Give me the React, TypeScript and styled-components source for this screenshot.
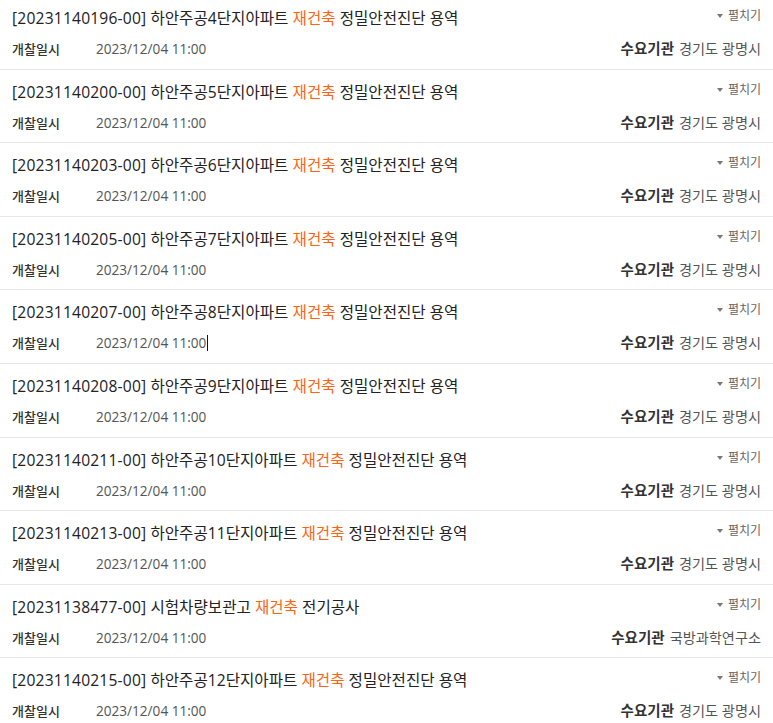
import React from "react";
import styled, { createGlobalStyle } from "styled-components";

interface Bid {
  no: string;
  before: string;
  after: string;
  agency: string;
  date: string;
  caret?: boolean;
}

const bids: Bid[] = [
  { no: "20231140196-00", before: "하안주공4단지아파트", after: "정밀안전진단 용역", agency: "경기도 광명시", date: "2023/12/04 11:00" },
  { no: "20231140200-00", before: "하안주공5단지아파트", after: "정밀안전진단 용역", agency: "경기도 광명시", date: "2023/12/04 11:00" },
  { no: "20231140203-00", before: "하안주공6단지아파트", after: "정밀안전진단 용역", agency: "경기도 광명시", date: "2023/12/04 11:00" },
  { no: "20231140205-00", before: "하안주공7단지아파트", after: "정밀안전진단 용역", agency: "경기도 광명시", date: "2023/12/04 11:00" },
  { no: "20231140207-00", before: "하안주공8단지아파트", after: "정밀안전진단 용역", agency: "경기도 광명시", date: "2023/12/04 11:00", caret: true },
  { no: "20231140208-00", before: "하안주공9단지아파트", after: "정밀안전진단 용역", agency: "경기도 광명시", date: "2023/12/04 11:00" },
  { no: "20231140211-00", before: "하안주공10단지아파트", after: "정밀안전진단 용역", agency: "경기도 광명시", date: "2023/12/04 11:00" },
  { no: "20231140213-00", before: "하안주공11단지아파트", after: "정밀안전진단 용역", agency: "경기도 광명시", date: "2023/12/04 11:00" },
  { no: "20231138477-00", before: "시험차량보관고", after: "전기공사", agency: "국방과학연구소", date: "2023/12/04 11:00" },
  { no: "20231140215-00", before: "하안주공12단지아파트", after: "정밀안전진단 용역", agency: "경기도 광명시", date: "2023/12/04 11:00" },
];

const GlobalStyle = createGlobalStyle`
  html, body {
    margin: 0;
    padding: 0;
    background: #fff;
  }
  body {
    font-family: "Open Sans", "Noto Sans CJK KR", sans-serif;
    overflow: hidden;
  }
`;

const List = styled.ul`
  list-style: none;
  margin: -4px 0 0;
  padding: 0;
`;

const Row = styled.li`
  display: flex;
  flex-direction: column;
  gap: 6px;
  padding: 10px 12px 0 12px;
  border-bottom: 1px solid #e6e6e6;
  height: 73.6px;
  box-sizing: border-box;
`;

const Line = styled.div<{ $top?: boolean }>`
  display: flex;
  justify-content: space-between;
  align-items: ${(p) => (p.$top ? "flex-start" : "center")};
  height: 24px;
`;

const Title = styled.div`
  font-size: 15.6px;
  line-height: 24px;
  color: #222;
  white-space: nowrap;
`;

const Code = styled.span`
  letter-spacing: 0.2px;
`;

const Keyword = styled.span`
  color: #ff6414;
`;

const Toggle = styled.button`
  display: flex;
  align-items: center;
  gap: 5px;
  border: 0;
  background: none;
  padding: 0;
  margin-top: 2px;
  font-family: inherit;
  font-size: 12px;
  line-height: 16px;
  color: #666;
  cursor: pointer;
`;

const Arrow = styled.span`
  width: 0;
  height: 0;
  border-left: 3.5px solid transparent;
  border-right: 3.5px solid transparent;
  border-top: 4px solid #777;
`;

const Meta = styled.div`
  display: flex;
  align-items: center;
  line-height: 24px;
  margin-top: 2px;
`;

const Label = styled.span<{ $wide?: boolean }>`
  font-weight: ${(p) => (p.$wide ? 500 : 700)};
  color: #333;
  width: ${(p) => (p.$wide ? "84px" : "auto")};
  margin-right: ${(p) => (p.$wide ? "0" : "5px")};
  font-size: ${(p) => (p.$wide ? "13px" : "14.5px")};
`;

const Value = styled.span<{ $big?: boolean }>`
  color: #555;
  font-size: ${(p) => (p.$big ? "14.2px" : "13.6px")};
`;

const Caret = styled.span`
  display: inline-block;
  width: 1px;
  height: 16px;
  background: #111;
  vertical-align: -3px;
  margin-left: 1px;
`;

const App: React.FC = () => {
  return (
    <>
      <GlobalStyle />
      <List>
        {bids.map((bid) => (
          <Row key={bid.no}>
            <Line $top>
              <Title>
                <Code>[{bid.no}]</Code> {bid.before} <Keyword>재건축</Keyword> {bid.after}
              </Title>
              <Toggle>
                <Arrow />
                펼치기
              </Toggle>
            </Line>
            <Line>
              <Meta>
                <Label $wide>개찰일시</Label>
                <Value>
                  {bid.date}
                  {bid.caret && <Caret />}
                </Value>
              </Meta>
              <Meta>
                <Label>수요기관</Label>
                <Value $big>{bid.agency}</Value>
              </Meta>
            </Line>
          </Row>
        ))}
      </List>
    </>
  );
};

export default App;
